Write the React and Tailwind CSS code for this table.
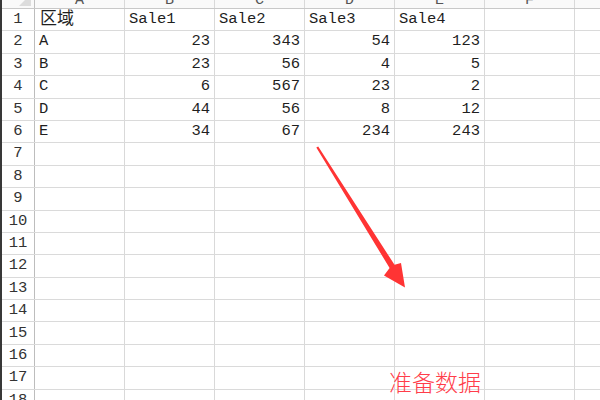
import React from "react";

const cols = ["A", "B", "C", "D", "E", "F", "G"];

const data = [
  ["区域", "Sale1", "Sale2", "Sale3", "Sale4"],
  ["A", 23, 343, 54, 123],
  ["B", 23, 56, 4, 5],
  ["C", 6, 567, 23, 2],
  ["D", 44, 56, 8, 12],
  ["E", 34, 67, 234, 243],
];

const rowCount = 18;

function Cell({ value }) {
  const isNum = typeof value === "number";
  const cjk = typeof value === "string" && /[\u4e00-\u9fff]/.test(value);
  return (
    <div
      className={
        "w-[90px] shrink-0 h-full border-r border-[#d9d9d9] flex items-center px-[4px] overflow-hidden whitespace-nowrap " +
        (isNum ? "justify-end" : "justify-start")
      }
    >
      <span className={cjk ? "text-[17px] pl-[1px]" : ""}>{value ?? ""}</span>
    </div>
  );
}

export default function App() {
  const rows = Array.from({ length: rowCount }, (_, i) => data[i] || []);

  return (
    <div
      className="relative w-[600px] h-[400px] overflow-hidden bg-white text-[#1f1f1f] border-l-2 border-[#383838]"
      style={{ fontFamily: '"Liberation Mono", "Noto Sans CJK SC", monospace' }}
    >
      <div className="-mt-[13px] text-[15.5px]">
        {/* column letters */}
        <div className="flex h-[22px] border-b border-[#c8c8c8] bg-[#f9f9f9]">
          <div className="w-[33px] shrink-0 border-r border-[#c0c0c0] relative">
            <div className="absolute right-[3px] bottom-[2px] w-0 h-0 border-l-[12px] border-l-transparent border-b-[12px] border-b-[#dcdcdc]" />
          </div>
          {cols.map((c) => (
            <div
              key={c}
              className="w-[90px] shrink-0 border-r border-[#d9d9d9] flex items-end justify-center text-[#555] text-[15px] leading-none"
            >
              {c}
            </div>
          ))}
        </div>

        {rows.map((r, i) => (
          <div key={i} className="flex h-[22.4px] border-b border-[#dadada]">
            <div className="w-[33px] shrink-0 border-r border-[#bdbdbd] flex items-center justify-center text-[#333]">
              {i + 1}
            </div>
            {cols.map((c, j) => (
              <Cell key={c} value={r[j]} />
            ))}
          </div>
        ))}
      </div>

      {/* annotation arrow */}
      <svg className="absolute left-0 top-0" width="600" height="400" viewBox="0 0 600 400">
        <polygon
          points="314.3,147.6 316.2,146.6 392.5,264.8 399,263 403,287.5 382,275.5 387.6,268"
          fill="#ff3434"
        />
      </svg>

      <div
        className="absolute left-[387px] top-[370px] text-[23px] font-light text-[#ff3d4a] leading-none"
        style={{ fontFamily: '"Noto Sans CJK SC", sans-serif' }}
      >
        准备数据
      </div>
    </div>
  );
}
